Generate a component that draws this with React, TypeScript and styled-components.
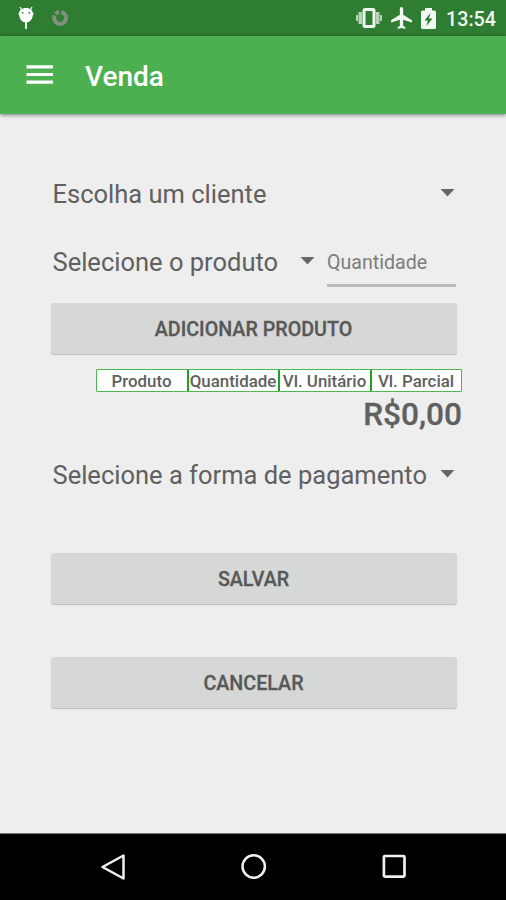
import React from "react";
import styled, { createGlobalStyle } from "styled-components";

const GlobalStyle = createGlobalStyle`
  * { box-sizing: border-box; }
  body { margin: 0; background: #eee; font-family: Roboto, "Noto Sans", sans-serif; }
`;

const Screen = styled.div`
  display: flex;
  flex-direction: column;
  width: 506px;
  height: 900px;
  overflow: hidden;
  background: #eeeeee;
  color: #606060;
`;

const StatusBar = styled.header`
  display: flex;
  align-items: center;
  justify-content: space-between;
  height: 36px;
  flex: none;
  padding: 0 10px 0 16px;
  background: #2f7d32;
`;

const StatusGroup = styled.div<{ $gap: number }>`
  display: flex;
  align-items: center;
  gap: ${(p) => p.$gap}px;
`;

const Clock = styled.span`
  margin-left: 1px;
  color: #f3f8f3;
  font-size: 19.7px;
  font-weight: 500;
  line-height: 36px;
  padding-top: 3px;
`;

const AppBar = styled.div`
  display: flex;
  align-items: center;
  gap: 31px;
  height: 78px;
  flex: none;
  padding: 0 26px;
  background: #4caf50;
  box-shadow: 0 1px 4px rgba(0, 0, 0, 0.5);
`;

const Title = styled.h1`
  margin: 3px 0 0;
  color: #fff;
  font-size: 28px;
  font-weight: 500;
  line-height: 36px;
`;

const Form = styled.main`
  display: flex;
  flex-direction: column;
  flex: 1;
  padding: 46px 49px 0 50px;
`;

const Spinner = styled.div<{ $width: number; $top?: number }>`
  display: flex;
  align-items: center;
  justify-content: space-between;
  width: ${(p) => p.$width}px;
  height: 68px;
  margin-top: ${(p) => p.$top ?? 0}px;
  padding-left: 2.5px;
`;

const SpinnerLabel = styled.span`
  font-size: 25.5px;
  line-height: 34px;
  white-space: nowrap;
`;

const ProductRow = styled.div`
  display: flex;
  align-items: flex-start;
  height: 75px;
`;

const QuantityInput = styled.input`
  width: 129px;
  height: 48px;
  margin: 11px 0 0 12px;
  padding: 1px 0 0;
  border: 0;
  border-bottom: 3px solid #bababa;
  background: transparent;
  font: 400 19.6px Roboto, "Noto Sans", sans-serif;
  outline: none;
  &::placeholder { color: #7d7d7d; opacity: 1; }
`;

const ActionButton = styled.button<{ $top?: number }>`
  width: 406px;
  height: 51px;
  flex: none;
  margin: ${(p) => p.$top ?? 0}px 0 0 0.5px;
  padding: 2px 0 0;
  border: 0;
  border-radius: 3px;
  background: #d6d8d7;
  box-shadow: 0 1px 1px rgba(0, 0, 0, 0.22);
  color: #585858;
  font: 500 19.7px Roboto, "Noto Sans", sans-serif;
  -webkit-text-stroke: 0.3px #585858;
`;

const TableHeader = styled.div`
  display: grid;
  grid-template-columns: 90px 91px 92px 91px;
  width: 366px;
  height: 23px;
  margin: 15px 0 0 46px;
  border: 1px solid #4db751;
  border-radius: 1px;
  background: #fff;
`;

const HeaderCell = styled.span`
  display: flex;
  align-items: center;
  justify-content: center;
  padding: 2px 1px 0 0;
  font-size: 16.9px;
  font-weight: 500;
  line-height: 19px;
  white-space: nowrap;
  & + & { border-left: 2px solid #1da522; }
`;

const Total = styled.strong`
  height: 44px;
  margin-right: -5px;
  text-align: right;
  font-size: 31.6px;
  font-weight: 500;
  -webkit-text-stroke: 0.3px #606060;
  line-height: 46px;
`;

const NavBar = styled.nav`
  display: flex;
  align-items: center;
  justify-content: space-between;
  height: 67px;
  flex: none;
  padding: 0 98px 0 99px;
  border-top: 1px solid #777;
  background: #000;
`;

const Caret = () => (
  <svg width="15" height="10" viewBox="0 0 15 10">
    <path d="M.5 0h14l-7 7.500z" fill="#666" />
  </svg>
);

const DebugIcon = () => (
  <svg width="20" height="24" viewBox="0 0 20 24">
    <path d="M5.500 3.500 4 1M14.500 3.500 16 1" stroke="#fff" strokeWidth="1.200" />
    <path d="M10 2C5.500 2 3.200 4.500 3.200 7L2 7.800l1.200 1.200c.2 4.200 3 7.500 6.800 7.500s6.600-3.300 6.800-7.500L18 7.800 16.800 7C16.800 4.500 14.500 2 10 2z" fill="#fff" />
    <circle cx="6.700" cy="6.800" r=".9" fill="#2f7d32" />
    <circle cx="13.300" cy="6.800" r=".9" fill="#2f7d32" />
    <path d="M10 16v7" stroke="#fff" strokeWidth="1.800" />
  </svg>
);

const SyncRing = () => (
  <svg width="18" height="18" viewBox="0 0 18 18" fill="none" stroke="#7f8f80" strokeWidth="4">
    <path d="M10.200 3A6 6 0 1 1 3.600 6.500" />
    <path d="M4.500 5A6 6 0 0 1 8.200 3" />
  </svg>
);

const VibrateIcon = () => (
  <svg width="26" height="20" viewBox="0 0 26 20">
    <path d="M0 7h2v6H0zM2.500 4H6v12H2.500zM20 4h3.500v12H20zM24 7h2v6h-2z" fill="#b9d3ba" />
    <rect x="8" y="1.500" width="10" height="17" rx="1" fill="none" stroke="#f1f8f1" strokeWidth="3" />
  </svg>
);

const PlaneIcon = () => (
  <svg width="21" height="22" viewBox="2 2 19 20">
    <path d="M21 16v-2l-8-5V3.500a1.500 1.500 0 0 0-3 0V9l-8 5v2l8-2.500V19l-2 1.500V22l3.500-1 3.500 1v-1.500L13 19v-5.500z" fill="#f1f8f1" />
  </svg>
);

const BatteryIcon = () => (
  <svg width="15" height="21" viewBox="0 0 15 21">
    <path d="M4 0h7v2.500h2.500Q15 2.500 15 4v15.500Q15 21 13.500 21h-12Q0 21 0 19.500V4Q0 2.500 1.500 2.500H4z" fill="#f1f8f1" />
    <path d="M9.500 5 3.500 12.500h3.300L5.500 18l6-7.500H8z" fill="#2f7d32" />
  </svg>
);

const MenuIcon = () => (
  <svg width="28" height="20" viewBox="0 0 28 20">
    <path d="M.5 1.800h26.500M.5 9.500h26.500M.5 17.200h26.500" stroke="#fff" strokeWidth="3.200" />
  </svg>
);

const BackIcon = () => (
  <svg width="28" height="28" viewBox="0 0 28 28">
    <path d="M24.500 2.500v23L3.500 14z" fill="none" stroke="#f0f0f0" strokeWidth="2.500" strokeLinejoin="round" />
  </svg>
);

const HomeIcon = () => (
  <svg width="28" height="28" viewBox="0 0 28 28">
    <circle cx="13.700" cy="13.500" r="11.200" fill="none" stroke="#f0f0f0" strokeWidth="2.500" />
  </svg>
);

const RecentIcon = () => (
  <svg width="28" height="28" viewBox="0 0 28 28">
    <rect x="3.900" y="3" width="20.600" height="20.600" rx="1" fill="none" stroke="#f0f0f0" strokeWidth="2.700" />
  </svg>
);

const columns = ["Produto", "Quantidade", "Vl. Unitário", "Vl. Parcial"];

export default function App() {
  return (
    <Screen>
      <GlobalStyle />
      <StatusBar>
        <StatusGroup $gap={15}>
          <DebugIcon />
          <SyncRing />
        </StatusGroup>
        <StatusGroup $gap={9}>
          <VibrateIcon />
          <PlaneIcon />
          <BatteryIcon />
          <Clock>13:54</Clock>
        </StatusGroup>
      </StatusBar>
      <AppBar>
        <MenuIcon />
        <Title>Venda</Title>
      </AppBar>
      <Form>
        <Spinner $width={405}>
          <SpinnerLabel>Escolha um cliente</SpinnerLabel>
          <Caret />
        </Spinner>
        <ProductRow>
          <Spinner $width={265}>
            <SpinnerLabel>Selecione o produto</SpinnerLabel>
            <Caret />
          </Spinner>
          <QuantityInput placeholder="Quantidade" aria-label="Quantidade" />
        </ProductRow>
        <ActionButton>ADICIONAR PRODUTO</ActionButton>
        <TableHeader>
          {columns.map((name) => (
            <HeaderCell key={name}>{name}</HeaderCell>
          ))}
        </TableHeader>
        <Total>R$0,00</Total>
        <Spinner $width={405} $top={5}>
          <SpinnerLabel>Selecione a forma de pagamento</SpinnerLabel>
          <Caret />
        </Spinner>
        <ActionButton $top={44}>SALVAR</ActionButton>
        <ActionButton $top={53}>CANCELAR</ActionButton>
      </Form>
      <NavBar>
        <BackIcon />
        <HomeIcon />
        <RecentIcon />
      </NavBar>
    </Screen>
  );
}
